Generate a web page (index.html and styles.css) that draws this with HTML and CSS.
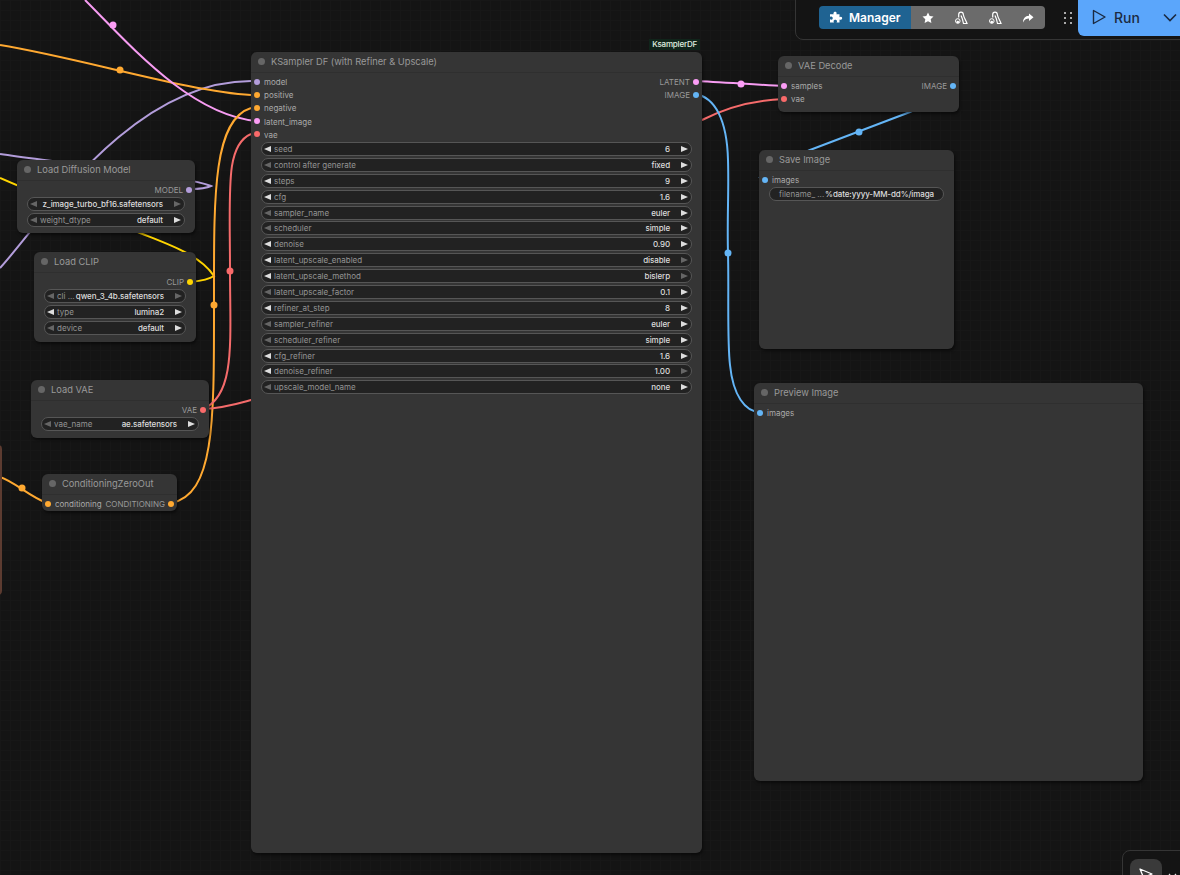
FILE: index.html
```html
<!DOCTYPE html>
<html>
  <head>
    <title>KSampler DF graph</title>
    <link rel="stylesheet" href="styles.css">
  </head>
  <body>
    <div class="canvas">
      <svg class="wires" width="1180" height="875" viewBox="0 0 1180 875">
        <g fill="none" stroke-width="2">
          <path class="w-purple" d="M0 268 C40 225 130 81 251 81" />
          <path class="w-purple" d="M0 154 C40 160 90 165 120 172 C150 176 190 178 211 186 C205 189 198 189 190 189" />
          <path class="w-yellow" d="M0 178 C50 200 100 218 140 233 C170 245 200 255 214 276 C208 280 200 281 191 282" />
          <path class="w-orange" d="M0 45 C80 58 190 92 251 95" />
          <path class="w-pink" d="M85 0 C130 45 190 115 257 121" />
          <path class="w-orange" d="M171 503 C215 495 214 420 214 305 C214 200 212 120 251 108" />
          <path class="w-red" d="M203 409 C236 395 230 340 230 271 C230 190 225 145 251 134" />
          <path class="w-red" d="M203 409 C225 408 240 403 251 400 L702 120 C725 108 755 100 784 99" />
          <path class="w-orange" d="M0 477 C15 482 30 497 47 503" />
          <path class="w-pink" d="M695 81 C720 82 760 85 784 86" />
          <path class="w-blue" d="M695 94 C715 97 727 120 728 160 C729 190 727 220 728 253 C729 290 727 340 730 365 C733 395 745 412 760 412" />
          <path class="w-blue" d="M953 86 C935 100 920 108 910 112 L810 150 C790 158 775 168 759 178" />
        </g>
        <circle class="d-pink" cx="113" cy="25" r="3.5" />
        <circle class="d-orange" cx="120" cy="70" r="3.5" />
        <circle class="d-orange" cx="22" cy="488" r="3.5" />
        <circle class="d-orange" cx="214" cy="305" r="3.5" />
        <circle class="d-red" cx="230" cy="271" r="3.5" />
        <circle class="d-pink" cx="741" cy="84" r="3.5" />
        <circle class="d-blue" cx="728" cy="253" r="3.5" />
        <circle class="d-blue" cx="859" cy="132" r="3.5" />
      </svg>

      <div class="edge-node"></div>

      <!-- main sampler -->
      <div class="node ksampler">
        <div class="badge">KsamplerDF</div>
        <div class="title"><span class="title-dot"></span>KSampler DF (with Refiner &amp; Upscale)</div>
        <div class="slots">
          <div class="slot"><span class="pin c-purple"></span><span>model</span><span class="out">LATENT</span><span class="pin c-pink"></span></div>
          <div class="slot"><span class="pin c-orange"></span><span>positive</span><span class="out">IMAGE</span><span class="pin c-blue"></span></div>
          <div class="slot"><span class="pin c-orange"></span><span>negative</span></div>
          <div class="slot"><span class="pin c-pink"></span><span>latent_image</span></div>
          <div class="slot"><span class="pin c-red"></span><span>vae</span></div>
        </div>
        <div class="widgets">
          <div class="widget"><i class="arr-l"></i><span class="lbl">seed</span><span class="val">6</span><i class="arr-r"></i></div>
          <div class="widget"><i class="arr-l off"></i><span class="lbl">control after generate</span><span class="val">fixed</span><i class="arr-r"></i></div>
          <div class="widget"><i class="arr-l"></i><span class="lbl">steps</span><span class="val">9</span><i class="arr-r"></i></div>
          <div class="widget"><i class="arr-l"></i><span class="lbl">cfg</span><span class="val">1.6</span><i class="arr-r"></i></div>
          <div class="widget"><i class="arr-l off"></i><span class="lbl">sampler_name</span><span class="val">euler</span><i class="arr-r"></i></div>
          <div class="widget"><i class="arr-l off"></i><span class="lbl">scheduler</span><span class="val">simple</span><i class="arr-r"></i></div>
          <div class="widget"><i class="arr-l"></i><span class="lbl">denoise</span><span class="val">0.90</span><i class="arr-r"></i></div>
          <div class="widget"><i class="arr-l"></i><span class="lbl">latent_upscale_enabled</span><span class="val">disable</span><i class="arr-r off"></i></div>
          <div class="widget"><i class="arr-l"></i><span class="lbl">latent_upscale_method</span><span class="val">bislerp</span><i class="arr-r off"></i></div>
          <div class="widget"><i class="arr-l off"></i><span class="lbl">latent_upscale_factor</span><span class="val">0.1</span><i class="arr-r"></i></div>
          <div class="widget"><i class="arr-l"></i><span class="lbl">refiner_at_step</span><span class="val">8</span><i class="arr-r"></i></div>
          <div class="widget"><i class="arr-l off"></i><span class="lbl">sampler_refiner</span><span class="val">euler</span><i class="arr-r"></i></div>
          <div class="widget"><i class="arr-l off"></i><span class="lbl">scheduler_refiner</span><span class="val">simple</span><i class="arr-r"></i></div>
          <div class="widget"><i class="arr-l"></i><span class="lbl">cfg_refiner</span><span class="val">1.6</span><i class="arr-r"></i></div>
          <div class="widget"><i class="arr-l"></i><span class="lbl">denoise_refiner</span><span class="val">1.00</span><i class="arr-r off"></i></div>
          <div class="widget"><i class="arr-l off"></i><span class="lbl">upscale_model_name</span><span class="val">none</span><i class="arr-r"></i></div>
        </div>
      </div>

      <div class="node load-model">
        <div class="title"><span class="title-dot"></span>Load Diffusion Model</div>
        <div class="slots">
          <div class="slot"><span class="out">MODEL</span><span class="pin c-purple"></span></div>
        </div>
        <div class="widgets">
          <div class="widget"><i class="arr-l off"></i><span class="val">z_image_turbo_bf16.safetensors</span><i class="arr-r off"></i></div>
          <div class="widget"><i class="arr-l off"></i><span class="lbl">weight_dtype</span><span class="val">default</span><i class="arr-r"></i></div>
        </div>
      </div>

      <div class="node load-clip">
        <div class="title"><span class="title-dot"></span>Load CLIP</div>
        <div class="slots">
          <div class="slot"><span class="out">CLIP</span><span class="pin c-yellow"></span></div>
        </div>
        <div class="widgets">
          <div class="widget"><i class="arr-l off"></i><span class="lbl">cli ...</span><span class="val">qwen_3_4b.safetensors</span><i class="arr-r off"></i></div>
          <div class="widget"><i class="arr-l"></i><span class="lbl">type</span><span class="val">lumina2</span><i class="arr-r"></i></div>
          <div class="widget"><i class="arr-l off"></i><span class="lbl">device</span><span class="val">default</span><i class="arr-r"></i></div>
        </div>
      </div>

      <div class="node load-vae">
        <div class="title"><span class="title-dot"></span>Load VAE</div>
        <div class="slots">
          <div class="slot"><span class="out">VAE</span><span class="pin c-red"></span></div>
        </div>
        <div class="widgets">
          <div class="widget"><i class="arr-l off"></i><span class="lbl">vae_name</span><span class="val">ae.safetensors</span><i class="arr-r"></i></div>
        </div>
      </div>

      <div class="node zero-out">
        <div class="title"><span class="title-dot"></span>ConditioningZeroOut</div>
        <div class="slots">
          <div class="slot"><span class="pin c-orange"></span><span>conditioning</span><span class="out">CONDITIONING</span><span class="pin c-orange"></span></div>
        </div>
      </div>

      <div class="node vae-decode">
        <div class="title"><span class="title-dot"></span>VAE Decode</div>
        <div class="slots">
          <div class="slot"><span class="pin c-pink"></span><span>samples</span><span class="out">IMAGE</span><span class="pin c-blue"></span></div>
          <div class="slot"><span class="pin c-red"></span><span>vae</span></div>
        </div>
      </div>

      <div class="node save-image">
        <div class="title"><span class="title-dot"></span>Save Image</div>
        <div class="slots">
          <div class="slot"><span class="pin c-blue"></span><span>images</span></div>
        </div>
        <div class="widgets">
          <div class="widget text-widget"><span class="lbl">filename_ ...</span><span class="val">%date:yyyy-MM-dd%/imaga</span></div>
        </div>
      </div>

      <div class="node preview-image">
        <div class="title"><span class="title-dot"></span>Preview Image</div>
        <div class="slots">
          <div class="slot"><span class="pin c-blue"></span><span>images</span></div>
        </div>
      </div>

      <!-- top right toolbar -->
      <div class="topbar">
        <div class="tools">
          <div class="manager">
            <svg width="14" height="14" viewBox="0 0 14 14"><path fill="#fff" d="M5 1.2c1-.8 2.600-.2 2.600 1 0 .5-.2.8-.4 1.100h3.300v3c.4-.3.700-.5 1.200-.5 1.300 0 1.800 1.300 1.300 2.300-.4.800-1.600 1-2.500.3v3.100H7.500c.3-.4.500-.7.500-1.200 0-1.200-1.500-1.800-2.700-1.200-.8.400-1 1.500-.3 2.400H1V8.300c.5.300.8.500 1.300.5 1.300 0 1.800-1.500 1.200-2.500-.4-.8-1.500-1-2.500-.3V3.300h3.700C4.300 2.700 4.300 1.800 5 1.200z"/></svg>
            <span>Manager</span>
          </div>
          <div class="tool-group">
            <svg width="12" height="12" viewBox="0 0 12 12"><path fill="#fff" d="M6 .6l1.700 3.500 3.800.5-2.800 2.700.7 3.800L6 9.300l-3.400 1.800.7-3.800L.5 4.600l3.800-.5z"/></svg>
            <svg width="14" height="14" viewBox="0 0 14 14"><path fill="none" stroke="#fff" stroke-width="1.200" d="M4.700 6.500V3.500a2.300 2.300 0 0 1 4.600 0C9.800 6.500 12 9.500 13 12.500H9.500C9 9.500 8 6.500 7 4.500"/><circle fill="none" stroke="#fff" cx="3.800" cy="10" r="2.300"/><circle fill="#fff" cx="3.800" cy="11" r="1.300"/></svg>
            <svg width="14" height="14" viewBox="0 0 14 14"><path fill="none" stroke="#fff" stroke-width="1.200" d="M4.700 6.500V3.500a2.300 2.300 0 0 1 4.600 0C9.800 6.500 12 9.500 13 12.500H9.500C9 9.500 8 6.500 7 4.500"/><circle fill="none" stroke="#fff" cx="3.800" cy="10" r="2.300"/><circle fill="#fff" cx="3.800" cy="11" r="1.300"/></svg>
            <svg width="12" height="12" viewBox="0 0 12 12"><path fill="#fff" d="M7 1.500l4.500 3.700L7 8.900V6.600C4.500 6.600 2.500 7.300 1 10.500 1 6.500 3 4 7 3.800z"/></svg>
          </div>
        </div>
        <div class="handle"><i></i><i></i><i></i><i></i><i></i><i></i></div>
      </div>
      <div class="run">
        <svg width="14" height="16" viewBox="0 0 14 16"><path fill="none" stroke="#1b2a41" stroke-width="1.400" stroke-linejoin="round" d="M1.500 1.500v13L13 8z"/></svg>
        <span class="run-text">Run</span>
        <svg class="run-caret" width="14" height="9" viewBox="0 0 14 9"><path fill="none" stroke="#1b2a41" stroke-width="1.600" d="M1 1.500l6 6 6-6"/></svg>
      </div>

      <!-- bottom right corner -->
      <div class="corner">
        <div class="corner-btn">
          <svg width="16" height="16" viewBox="0 0 16 16"><path fill="none" stroke="#fff" stroke-width="1.300" stroke-linejoin="round" d="M2 2l12 5-5 2-2 5z"/></svg>
        </div>
        <svg width="9" height="7" viewBox="0 0 9 7"><path fill="none" stroke="#ddd" stroke-width="1.200" d="M1 1l3.500 4L8 1"/></svg>
      </div>
    </div>
  </body>
</html>
```

FILE: styles.css
```css
/* graph canvas */
html, body {
  margin: 0;
  padding: 0;
  height: 100%;
  overflow: hidden;
}
body {
  font-family: Inter, "Noto Sans", sans-serif;
  background: #141414;
}
.canvas {
  position: relative;
  width: 1180px;
  height: 875px;
  overflow: hidden;
  background-color: #141414;
  background-image:
    linear-gradient(#171717 1px, transparent 1px),
    linear-gradient(90deg, #171717 1px, transparent 1px);
  background-size: 10px 10px;
}
.wires {
  position: absolute;
  left: 0;
  top: 0;
}
.w-purple { stroke: #b39ddb; }
.w-yellow { stroke: #ffd500; }
.w-orange { stroke: #ffa931; }
.w-pink { stroke: #f79cf2; }
.w-red { stroke: #f56b6b; }
.w-blue { stroke: #64b5f6; }
.d-pink { fill: #fb9df5; }
.d-orange { fill: #ffa931; }
.d-red { fill: #f96a6a; }
.d-blue { fill: #64b5f6; }

.edge-node {
  position: absolute;
  left: -6px;
  top: 445px;
  width: 8px;
  height: 150px;
  background: #5c3b30;
  border-radius: 4px;
}

/* nodes */
.node {
  position: absolute;
  background: #353535;
  border-radius: 6px;
  box-shadow: 1px 2px 3px rgba(0, 0, 0, 0.5);
  font-size: 8px;
  color: #aaa;
}
.ksampler { left: 251px; top: 52px; width: 451px; height: 801px; }
.load-model { left: 17px; top: 160px; width: 178px; height: 73px; }
.load-clip { left: 34px; top: 252px; width: 162px; height: 90px; }
.load-vae { left: 31px; top: 380px; width: 178px; height: 58px; }
.zero-out { left: 42px; top: 474px; width: 135px; height: 37px; }
.vae-decode { left: 778px; top: 56px; width: 181px; height: 56px; }
.save-image { left: 759px; top: 150px; width: 195px; height: 199px; }
.preview-image { left: 754px; top: 383px; width: 389px; height: 398px; }

.title {
  display: flex;
  align-items: center;
  box-sizing: border-box;
  height: 21px;
  padding: 0 0 1px 7px;
  font-size: 9.300px;
  color: #999;
  border-bottom: 1px solid #2f2f2f;
}
.title-dot {
  width: 7px;
  height: 7px;
  margin-right: 6px;
  border-radius: 50%;
  background: #666;
}
.badge {
  position: absolute;
  right: 2px;
  top: -13px;
  height: 11px;
  padding: 0 3px;
  line-height: 11px;
  font-size: 8px;
  font-weight: 500;
  letter-spacing: -0.2px;
  color: #e0f0e0;
  background: #10241a;
}

/* input and output rows */
.slots {
  padding-top: 2px;
}
.slot {
  display: flex;
  align-items: center;
  height: 13.200px;
  padding: 0 3px;
  line-height: 13px;
}
.slot > span:not(.pin) {
  padding-top: 2px;
}
.slot > .out {
  margin-left: auto;
  color: #999;
}
.pin {
  flex: none;
  width: 6px;
  height: 6px;
  margin-right: 4px;
  border-radius: 50%;
}
.out + .pin {
  margin-left: 3px;
  margin-right: 0;
}
.c-purple { background: #b39ddb; }
.c-pink { background: #fb9df5; }
.c-orange { background: #ffa931; }
.c-blue { background: #64b5f6; }
.c-red { background: #f96a6a; }
.c-yellow { background: #ffd500; }

/* combo widgets */
.widgets {
  display: flex;
  flex-direction: column;
  gap: 1.900px;
  margin: 1px 10px 0;
}
.widget {
  display: flex;
  align-items: center;
  height: 14px;
  padding: 0 3px 0 2px;
  box-sizing: border-box;
  border: 1px solid #565656;
  border-radius: 7px;
  background: #222;
  line-height: 12px;
  white-space: nowrap;
}
.lbl {
  margin-left: 3px;
  color: #949494;
}
.val {
  margin-left: auto;
  color: #ddd;
  font-weight: 500;
  letter-spacing: -0.1px;
}
.text-widget {
  padding: 0 9px 0 6px;
}
.arr-l,
.arr-r {
  flex: none;
  width: 0;
  height: 0;
  border-top: 3.500px solid transparent;
  border-bottom: 3.500px solid transparent;
}
.arr-l { border-right: 7px solid #ddd; }
.arr-r {
  margin-left: 11px;
  border-left: 7px solid #ddd;
}
.arr-l.off { border-right-color: #666; }
.arr-r.off { border-left-color: #666; }

/* toolbar */
.topbar {
  position: absolute;
  left: 795px;
  top: -10px;
  width: 400px;
  height: 50px;
  box-sizing: border-box;
  padding: 15px 0 0 23px;
  display: flex;
  border: 1px solid #353535;
  border-radius: 8px;
  background: #141414;
}
.tools {
  display: flex;
  height: 23px;
  border-radius: 4px;
  overflow: hidden;
}
.manager {
  display: flex;
  align-items: center;
  gap: 6px;
  width: 92px;
  box-sizing: border-box;
  padding-left: 10px;
  background: #1f6392;
  color: #fff;
  font-size: 12px;
  font-weight: 600;
}
.tool-group {
  display: flex;
  align-items: center;
  gap: 20px;
  width: 134px;
  box-sizing: border-box;
  padding-left: 11px;
  background: #6b6b6b;
}
.handle {
  display: grid;
  grid-template-columns: 2px 2px;
  gap: 3px 4px;
  align-content: center;
  margin: 0 0 0 19px;
  height: 23px;
}
.handle i {
  width: 2px;
  height: 2px;
  background: #aaa;
}
.run {
  position: absolute;
  left: 1078px;
  top: 0;
  width: 102px;
  height: 36px;
  display: flex;
  align-items: center;
  box-sizing: border-box;
  padding: 0 0 2px 14px;
  background: #5ba6fb;
  border-radius: 0 0 0 6px;
  color: #1b2a41;
  font-size: 14px;
  font-weight: 500;
}
.run-text {
  margin-left: 8px;
}
.run-caret {
  margin-left: 23px;
}
.corner {
  position: absolute;
  left: 1122px;
  top: 850px;
  width: 80px;
  height: 50px;
  box-sizing: border-box;
  padding: 8px 0 0 7px;
  display: flex;
  gap: 6px;
  border: 1px solid #353535;
  border-radius: 8px;
  background: #141414;
}
.corner-btn {
  width: 32px;
  height: 32px;
  padding: 8px;
  box-sizing: border-box;
  border-radius: 8px;
  background: #3a3a3a;
}
.corner > svg {
  margin-top: 14px;
}
```
